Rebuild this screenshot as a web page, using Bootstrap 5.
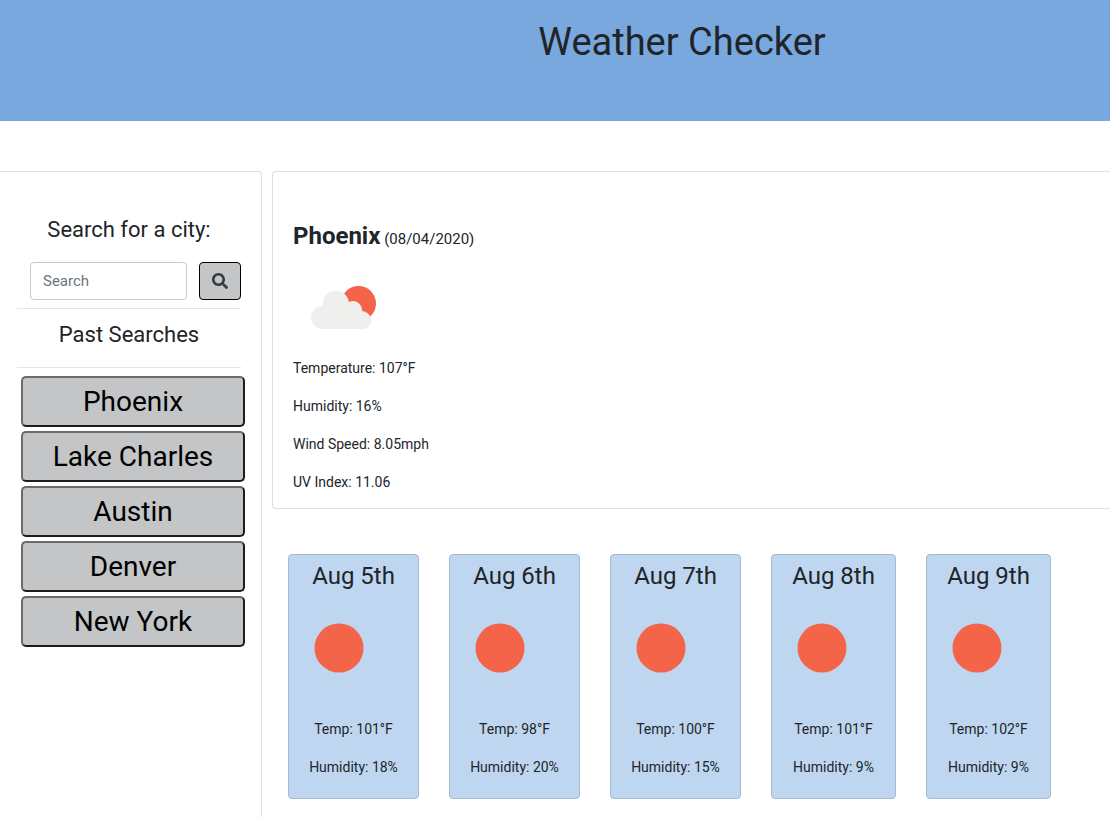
<!DOCTYPE html>
<html lang="en">
<head>
<meta charset="utf-8">
<meta name="viewport" content="width=device-width, initial-scale=1">
<title>Weather Checker</title>
<link rel="stylesheet" href="https://cdn.jsdelivr.net/npm/bootstrap@5.3.0/dist/css/bootstrap.min.css">
<style>
body { font: 14px/24px Roboto, "Liberation Sans", sans-serif; color: #212529; }
.page-head { background: #78a8de; height: 121px; padding: 16px 0 0 254px; }
.page-head h1 { font-size: 38px; line-height: 52px; }
main { margin-top: 50px; gap: 10px; }
.side { width: 262px; border: 1px solid #dfdfdf; border-width: 1px 1px 0 0; border-top-right-radius: 4px; padding: 40px 20px 0 17px; }
.side h2 { font-size: 22px; line-height: 36px; }
.side hr { color: #000; opacity: .1; }
.side .rule-low { margin: 14px 0 0; }
.search-row { gap: 12px; padding-left: 13px; margin-top: 14px; }
.search-row .form-control { height: 38px; font-size: 15px; border: 1px solid #c3cad2; border-radius: 4px; }
.search-row .form-control::placeholder { color: #6c757d; }
.search-row .btn { width: 42px; height: 38px; background: #c4c5c7; border: 1px solid #000; border-radius: 4px; }
.cities { gap: 4px; margin: 8px -4px 0 4px; }
.city { height: 51px; font-size: 28px; line-height: 44px; padding: 0; color: #000; background: #c4c5c7; border: 2px solid; border-color: #6b6b6b #1c1c1c #1c1c1c #6b6b6b; border-radius: 5px; }
.today { border: 1px solid #dfdfdf; border-right: 0; border-radius: 4px 0 0 4px; padding: 48px 20px 0; }
.today h2 { font-size: 15px; line-height: 33px; }
.today h2 strong { font-size: 24px; }
.today p, .day p { margin-bottom: 14px; }
.forecast { display: grid; grid-template-columns: repeat(3, 131px) repeat(2, 125px); gap: 30px; margin: 45px 0 18px 16px; }
.day { background: #bfd6f0; border: 1px solid #a3b9d4; border-radius: 4px; padding: 5px 0; }
.day h3 { font-size: 24px; line-height: 32px; margin-bottom: 6px; }
.day svg { margin-bottom: 19px; }
</style>
</head>
<body class="d-flex flex-column min-vh-100">
<header class="page-head text-center"><h1 class="fw-normal m-0">Weather Checker</h1></header>
<main class="d-flex flex-grow-1">
  <aside class="side flex-shrink-0 text-center">
    <h2 class="fw-normal m-0"><label for="city">Search for a city:</label></h2>
    <form class="search-row d-flex">
      <input id="city" type="text" class="form-control" placeholder="Search">
      <button type="button" class="btn p-0 flex-shrink-0 d-flex align-items-center justify-content-center" aria-label="Search">
        <svg width="16" height="16" viewBox="0 0 512 512" fill="#343a40" aria-hidden="true"><path d="M505 442.700 405.300 343c-4.500-4.500-10.600-7-17-7H372c27.600-35.300 44-79.700 44-128C416 93.100 322.900 0 208 0S0 93.100 0 208s93.100 208 208 208c48.300 0 92.700-16.400 128-44v16.300c0 6.400 2.500 12.500 7 17l99.700 99.700c9.400 9.400 24.600 9.400 33.900 0l28.300-28.300c9.400-9.400 9.400-24.600.1-34zM208 336c-70.700 0-128-57.200-128-128 0-70.700 57.200-128 128-128 70.700 0 128 57.200 128 128 0 70.700-57.200 128-128 128z"/></svg>
      </button>
    </form>
    <hr class="mt-2 mb-2">
    <h2 class="fw-normal m-0">Past Searches</h2>
    <hr class="rule-low">
    <div class="cities d-flex flex-column">
      <button type="button" class="city">Phoenix</button>
      <button type="button" class="city">Lake Charles</button>
      <button type="button" class="city">Austin</button>
      <button type="button" class="city">Denver</button>
      <button type="button" class="city">New York</button>
    </div>
  </aside>
  <div class="flex-grow-1">
    <section class="today">
      <h2 class="fw-normal m-0"><strong>Phoenix</strong> (08/04/2020)</h2>
      <svg class="d-block" width="100" height="100" viewBox="0 0 100 100" aria-hidden="true">
        <circle cx="65.500" cy="47.500" r="17.500" fill="#f36449"/>
        <g fill="#efefee" stroke="#fbe3dd" stroke-width="1"><circle cx="43" cy="47.500" r="12.500"/><circle cx="60" cy="54" r="8.500"/><circle cx="69" cy="64.300" r="8.700"/></g>
        <g fill="#efefee"><circle cx="29.500" cy="61.500" r="11.500"/><circle cx="43" cy="47.500" r="12.500"/><circle cx="60" cy="54" r="8.500"/><circle cx="69" cy="64.300" r="8.700"/><path d="M31 48h24l14 12v13H29.500V54z"/></g>
      </svg>
      <p>Temperature: 107°F</p>
      <p>Humidity: 16%</p>
      <p>Wind Speed: 8.05mph</p>
      <p>UV Index: 11.06</p>
    </section>
    <section class="forecast text-center">
      <article class="day"><h3 class="fw-normal">Aug 5th</h3><svg class="d-block" width="100" height="100" aria-hidden="true"><circle cx="50" cy="50" r="24.500" fill="#f36449"/></svg><p>Temp: 101°F</p><p>Humidity: 18%</p></article>
      <article class="day"><h3 class="fw-normal">Aug 6th</h3><svg class="d-block" width="100" height="100" aria-hidden="true"><circle cx="50" cy="50" r="24.500" fill="#f36449"/></svg><p>Temp: 98°F</p><p>Humidity: 20%</p></article>
      <article class="day"><h3 class="fw-normal">Aug 7th</h3><svg class="d-block" width="100" height="100" aria-hidden="true"><circle cx="50" cy="50" r="24.500" fill="#f36449"/></svg><p>Temp: 100°F</p><p>Humidity: 15%</p></article>
      <article class="day"><h3 class="fw-normal">Aug 8th</h3><svg class="d-block" width="100" height="100" aria-hidden="true"><circle cx="50" cy="50" r="24.500" fill="#f36449"/></svg><p>Temp: 101°F</p><p>Humidity: 9%</p></article>
      <article class="day"><h3 class="fw-normal">Aug 9th</h3><svg class="d-block" width="100" height="100" aria-hidden="true"><circle cx="50" cy="50" r="24.500" fill="#f36449"/></svg><p>Temp: 102°F</p><p>Humidity: 9%</p></article>
    </section>
  </div>
</main>
<script src="https://cdn.jsdelivr.net/npm/bootstrap@5.3.0/dist/js/bootstrap.bundle.min.js"></script>
</body>
</html>
